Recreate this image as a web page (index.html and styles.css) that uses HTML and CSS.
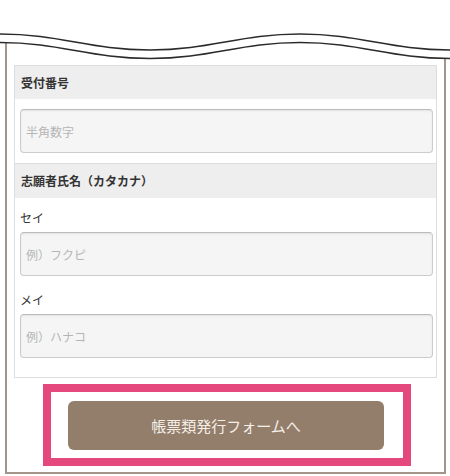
FILE: index.html
```html
<!DOCTYPE html>
<html lang="ja">
<head>
  <meta charset="UTF-8">
  <meta name="viewport" content="width=device-width, initial-scale=1.0">
  <title>帳票類発行</title>
  <link rel="stylesheet" href="styles.css">
</head>
<body>
  <div class="page">
    <svg class="wave" width="450" height="62" viewBox="0 0 450 62" aria-hidden="true">
      <path d="M0,42.5 C60,42.5 90,58.5 150,58.5 S240,42.5 300,42.5 S390,58.5 450,58.5 L450,0 L0,0 Z" fill="#fff"/>
      <path d="M0,34 C60,34 90,50 150,50 S240,34 300,34 S390,50 450,50" fill="none" stroke="#2b2b2b" stroke-width="1.6"/>
      <path d="M0,42.5 C60,42.5 90,58.5 150,58.5 S240,42.5 300,42.5 S390,58.5 450,58.5" fill="none" stroke="#2b2b2b" stroke-width="1.6"/>
    </svg>

    <div class="frame">
      <div class="panel">
        <div class="section">
          <div class="section-head">受付番号</div>
          <div class="section-body">
            <input type="text" class="field-input" placeholder="半角数字">
          </div>
        </div>
        <div class="section">
          <div class="section-head">志願者氏名（カタカナ）</div>
          <div class="section-body">
            <div class="field">
              <label class="field-label">セイ</label>
              <input type="text" class="field-input" placeholder="例）フクピ">
            </div>
            <div class="field">
              <label class="field-label">メイ</label>
              <input type="text" class="field-input" placeholder="例）ハナコ">
            </div>
          </div>
        </div>
      </div>

      <div class="action">
        <button class="submit">帳票類発行フォームへ</button>
      </div>
    </div>
  </div>
</body>
</html>
```

FILE: styles.css
```css
body {
  margin: 0;
  background: white;
  color: #333;
  font-family: 'Noto Sans CJK JP', 'Noto Sans', sans-serif;
  font-size: 12px;
  overflow: hidden;
}
.page {
  position: relative;
  padding-top: 40px;
}
.wave {
  position: absolute;
  top: 0;
  left: 0;
  display: block;
}
.frame {
  margin: 0 4px 0 5px;
  padding: 25px 7px 6px 7px;
  border: 2px solid #a39589;
  border-top: none;
}
.panel {
  border: 1px solid #ddd;
}
.section + .section {
  border-top: 1px solid #ddd;
}
.section-head {
  height: 33px;
  line-height: 33px;
  padding-left: 6px;
  background: #eee;
  font-weight: bold;
  font-size: 12px;
}
.section + .section .section-head {
  height: 34px;
  line-height: 34px;
}
.section-body {
  padding: 10px 3px 10px 5px;
}
.section + .section .section-body {
  padding-bottom: 19px;
}
.field + .field {
  margin-top: 14px;
}
.field-label {
  display: block;
  line-height: 20px;
  margin-bottom: 4px;
  font-size: 12px;
  color: #333;
}
.field-input {
  display: block;
  box-sizing: border-box;
  width: 100%;
  height: 44px;
  margin: 0;
  padding: 0 5px;
  border: 1px solid #ccc;
  border-top-color: #bbb;
  border-radius: 4px;
  background: #f5f5f5;
  box-shadow: inset 0 1px 2px rgba(0, 0, 0, 0.08);
  font-family: inherit;
  font-size: 12px;
  color: #333;
}
.field-input::placeholder {
  color: #b5b5b5;
}
.action {
  margin: 6px 26px 0 29px;
  padding: 9px 19px 8px 17px;
  border: 8px solid #e4487c;
}
.submit {
  display: block;
  width: 100%;
  height: 49px;
  border: none;
  border-radius: 6px;
  background: #937e6c;
  color: #f5efe8;
  font-family: inherit;
  font-size: 15px;
  cursor: pointer;
}
```
